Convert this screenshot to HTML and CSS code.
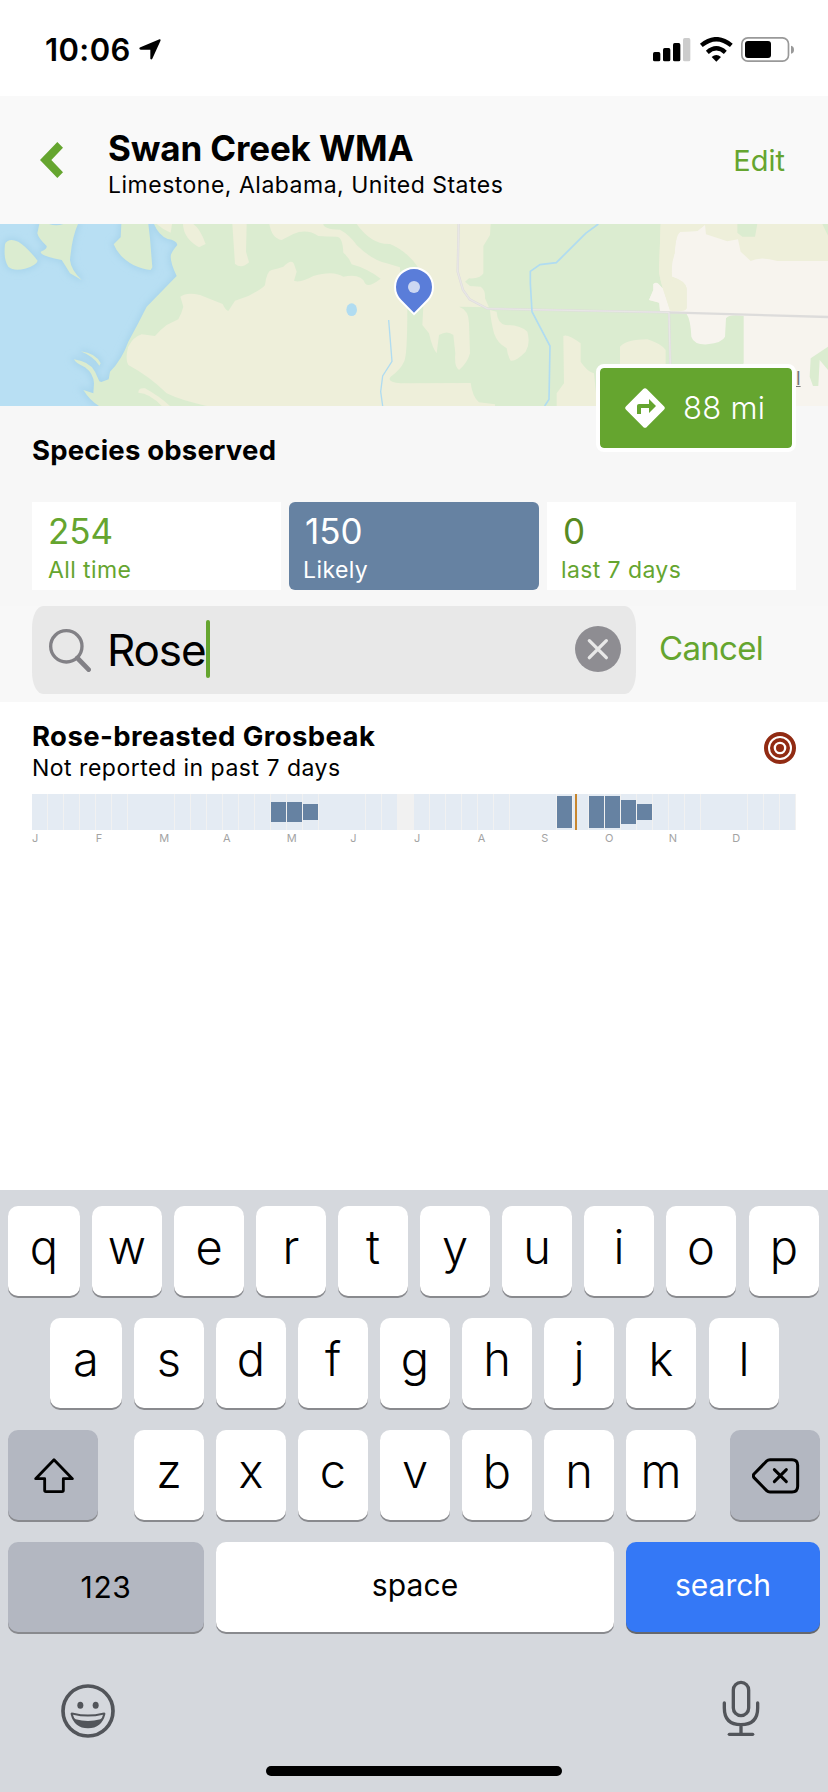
FILE: index.html
```html
<!DOCTYPE html>
<html lang="en">
<head>
<meta charset="utf-8">
<title>Swan Creek WMA</title>
<link rel="stylesheet" href="styles.css">
</head>
<body>
<div class="screen">
  <div class="status">
    <div class="status-left">
      <span class="time">10:06</span>
      <svg class="loc" viewBox="0 0 66 64"><path d="M62 1Q66 0 65 5L40 60Q37 65 34 60V33H5Q-2 31 2 26Z"/></svg>
    </div>
    <div class="status-right">
      <svg width="142" height="26" viewBox="0 0 426 78">
        <rect x="0" y="45" width="22" height="28" rx="5"/><rect x="30" y="33" width="22" height="40" rx="5"/><rect x="60" y="18" width="22" height="55" rx="5"/><rect x="90" y="3" width="22" height="70" rx="5" fill="#ccc"/>
        <path d="M145 25Q190 -12 235 25" fill="none" stroke="#000" stroke-width="13"/>
        <path d="M163 46Q190 22 217 46" fill="none" stroke="#000" stroke-width="13"/>
        <path d="M176 60Q190 48 204 60L190 74Z"/>
        <rect x="266.500" y="2.500" width="140" height="70" rx="18" fill="#fff" stroke="#999" stroke-width="5"/>
        <rect x="276" y="12" width="78" height="51" rx="9"/>
        <path d="M414 26Q423 28 423 38T414 50Z" fill="#999"/>
      </svg>
    </div>
  </div>

  <header class="header">
    <svg class="back" viewBox="0 0 69 108"><path d="M52 0L69 17L34 54L69 91L52 108L0 54Z"/></svg>
    <div class="heading">
      <h1 class="title">Swan Creek WMA</h1>
      <div class="subtitle">Limestone, Alabama, United States</div>
    </div>
    <a class="edit">Edit</a>
  </header>

  <div class="map">
    <svg class="map-art" viewBox="0 42 2484 546">
      <defs>
        <filter id="soft" x="-10%" y="-10%" width="120%" height="120%"><feGaussianBlur stdDeviation="9"/></filter>
        <g id="land">
          <path d="M462 42Q476 76 503 87Q530 91 532 105Q512 128 512 140Q512 160 530 198L440 290Q415 340 385 395Q365 450 330 485L326 508L304 516L298 514Q292 500 285 485Q270 455 222 448Q225 458 255 472Q280 490 282 520L280 550L250 540Q270 572 297 588H1300V42Z"/>
          <path d="M242 424Q288 430 302 460L298 467Q282 440 242 424Z"/>
          <path d="M15 102Q25 83 55 95Q80 110 113 152Q110 165 75 176Q40 184 25 170Q10 150 15 102Z"/>
          <path d="M118 42L112 70Q115 85 140 108Q142 118 122 125Q120 138 185 150Q195 165 210 190L245 210Q213 180 210 150Q216 80 234 42H190Q168 50 147 42Z"/>
          <path d="M364 42L362 82L341 103Q355 140 400 165Q430 178 452 180L457 172L450 85L445 42Z"/>
        </g>
      </defs>
      <rect y="42" width="2484" height="546" fill="#b8dff3"/>
      <use href="#land" fill="#a9d5ec" stroke="#a9d5ec" stroke-width="14" filter="url(#soft)"/>
      <use href="#land" fill="#dbecd0"/>
      <g fill="#eeefda">
        <path d="M541 260Q560 245 600 255L668 282Q676 300 685 303L705 272L745 258Q790 235 795 225Q800 183 815 180Q835 175 850 170Q875 145 882 162L890 185L882 212Q900 220 940 198Q1000 180 1030 200Q1085 190 1095 220Q1104 235 1142 206Q1100 175 1055 163Q1045 140 1030 128Q1028 80 1010 80Q980 80 955 78Q920 55 880 72L845 90Q815 85 808 42H2484V588H620Q540 570 500 550Q450 500 385 465Q375 450 384 412Q400 380 425 373L465 378Q480 360 500 345L535 328Q545 310 550 290Z"/>
        <path d="M470 42Q490 60 512 68L516 42ZM549 42Q550 85 597 112L617 102Q600 55 580 42ZM697 42L705 162Q725 178 747 157L738 125L740 42ZM415 548Q415 532 435 535Q480 560 510 588H485Q450 550 415 548Z"/>
      </g>
      <g fill="#dbecd0">
        <path d="M970 42Q970 58 1020 59Q1050 75 1070 105Q1115 150 1160 160L1200 172V215L1260 240V180Q1225 125 1170 102Q1115 105 1070 42Z"/>
      </g>
      <ellipse cx="1055" cy="299" rx="16" ry="19" fill="#b0dcf1"/>
      <path d="M1166 330L1176 454L1148 498L1142 545L1148 588" fill="none" stroke="#b0dcf1" stroke-width="4"/>
      <g transform="translate(1242 0)">
        <path fill="#f7f4ee" d="M774 200Q770 160 782 130Q785 70 800 65L850 63L873 45L876 73L940 94L972 88L980 125L1010 153Q1040 138 1090 153H1242V588H700V300L735 275L705 270L718 240V222Q730 215 746 235L768 300Q815 305 818 295V235Q815 213 774 200Z"/>
        <path fill="#dbecd0" d="M230 42L228 75L208 108L208 190Q200 207 165 205L153 215L168 228L200 230Q215 240 213 265L225 292L135 290Q165 300 165 340L168 430Q160 460 135 480Q120 470 124 430L118 375Q100 360 75 375L68 430Q55 415 45 370L25 345L28 290L-20 295Q-20 440 -30 455Q-40 478 -70 500Q-84 515 -40 520L170 519Q175 560 195 577L243 583V588H428V550L450 520L448 378Q460 370 500 400V455Q520 485 540 490L550 588H900L989 460V318Q945 312 936 325L933 380Q925 398 880 403Q840 405 832 380Q830 330 818 312L765 305L738 302L736 278L705 270L718 240V222Q730 215 746 235Q737 200 735 185L740 42Z"/>
        <path fill="#f7f4ee" d="M705 270L718 240V222Q730 210 744 235L768 304L738 302L736 278Z"/>
        <path fill="#eeefda" d="M744 225L768 302Q815 308 818 295V235Q815 213 774 200ZM618 465V410Q640 388 700 388Q740 400 755 420V465ZM228 300L248 305Q250 340 275 345Q320 345 340 365Q350 400 335 425Q305 455 290 452Q280 435 278 415Q250 400 240 370Q230 330 228 300Z"/>
        <path fill="#eeefda" d="M740 42H873L850 63L800 65Q785 70 782 130Q770 160 774 200L777 210L744 226Q737 200 735 185Z"/>
        <path fill="#dbecd0" d="M970 42V68L985 80H1023L1030 42ZM1225 42L1242 77V42ZM1242 410L1190 445L1187 500L1197 528H1213L1217 450L1242 480Z"/>
        <path d="M134 42L131 185L147 240L167 268L220 296L765 307L1242 321M765 307L769 470" fill="none" stroke="#dddcdb" stroke-width="7"/>
        <path d="M134 42L131 185L147 240L167 268L220 296L765 307M765 307L769 470" fill="none" stroke="#e8e6e6" stroke-width="4"/>
        <path d="M553 42L515 70L427 158L378 164L349 184V220L354 305L408 408L405 568L392 588" fill="none" stroke="#b0dcf1" stroke-width="5"/>
      </g>
      <path d="M1242 308L1203.800 269.200A54 54 0 1 1 1280.200 269.200Z" fill="#5a7dd9" stroke="#fff" stroke-width="12" paint-order="stroke"/>
      <circle cx="1242" cy="231" r="18" fill="#cdd8f2"/>
    </svg>
    <span class="legal">l</span>
    <a class="directions">
      <svg class="turn" viewBox="0 0 120 120"><path d="M54 4Q60-3 66 4L116 54Q123 60 116 66L66 116Q60 123 54 116L4 66Q-3 60 4 54Z" fill="#fff"/><path d="M36 78V53Q36 48 42 48H72V33L93 54L72 75V60H48V78Z" fill="#65a52f"/></svg>
      <span class="miles">88 mi</span>
    </a>
  </div>

  <section class="species">
    <h2 class="section-title">Species observed</h2>
    <div class="cards">
      <div class="card"><div class="num n1">254</div><div class="lab l1">All time</div></div>
      <div class="card on"><div class="num n2">150</div><div class="lab l2">Likely</div></div>
      <div class="card"><div class="num n3">0</div><div class="lab l3">last 7 days</div></div>
    </div>
  </section>

  <div class="search">
    <div class="field">
      <svg class="mag" viewBox="0 0 126 129"><circle cx="52" cy="52" r="47" fill="none" stroke="#828186" stroke-width="10"/><path d="M85 87L119 122" stroke="#828186" stroke-width="14" stroke-linecap="round"/></svg>
      <span class="query">Rose</span><span class="caret"></span>
      <svg class="clear" viewBox="0 0 138 138"><circle cx="69" cy="69" r="69" fill="#8e8d92"/><path d="M43 44L94 95M94 44L43 95" stroke="#e8e8e8" stroke-width="10" stroke-linecap="round"/></svg>
    </div>
    <a class="cancel">Cancel</a>
  </div>

  <main class="results">
    <div class="bird">
      <div>
        <div class="name">Rose-breasted Grosbeak</div>
        <div class="note">Not reported in past 7 days</div>
      </div>
      <svg class="target" viewBox="0 0 96 96" fill="none" stroke="#912b13"><circle cx="48" cy="48" r="42" stroke-width="12"/><circle cx="48" cy="48" r="24.500" stroke-width="11"/><circle cx="48" cy="48" r="12" fill="#912b13" stroke="none"/></svg>
    </div>
    <div class="weeks" id="weeks"></div>
    <div class="months"><span>J</span><span>F</span><span>M</span><span>A</span><span>M</span><span>J</span><span>J</span><span>A</span><span>S</span><span>O</span><span>N</span><span>D</span></div>
  </main>

  <div class="keyboard">
    <div class="row r1"><b class="key wide">q</b><b class="key">w</b><b class="key">e</b><b class="key">r</b><b class="key">t</b><b class="key">y</b><b class="key">u</b><b class="key">i</b><b class="key">o</b><b class="key last">p</b></div>
    <div class="row r2"><b class="key wide">a</b><b class="key">s</b><b class="key">d</b><b class="key">f</b><b class="key">g</b><b class="key">h</b><b class="key">j</b><b class="key">k</b><b class="key last">l</b></div>
    <div class="row r3">
      <b class="key fn shift"><svg width="40" height="36" viewBox="0 0 120 108" fill="none" stroke="#000" stroke-width="8.500" stroke-linejoin="round"><path d="M60 5L115 62H88V97Q88 101 84 101H36Q32 101 32 97V62H5Z"/></svg></b>
      <b class="key">z</b><b class="key">x</b><b class="key">c</b><b class="key">v</b><b class="key">b</b><b class="key">n</b><b class="key">m</b>
      <b class="key fn del"><svg width="48" height="36" viewBox="0 0 144 108" fill="none" stroke="#000" stroke-width="9" stroke-linejoin="round" stroke-linecap="round"><path d="M54 5H120Q137 5 137 22V85Q137 102 120 102H54Q48 102 44 98L6 59Q2 53 6 48L44 9Q48 5 54 5Z"/><path d="M67 35L103 71M103 35L67 71"/></svg></b>
    </div>
    <div class="row r4"><b class="key fn num-key">123</b><b class="key space">space</b><b class="key go">search</b></div>
    <div class="tray">
      <svg width="54" height="54" viewBox="0 0 162 162"><circle cx="81" cy="81" r="75" fill="none" stroke="#52555a" stroke-width="11"/><ellipse cx="58" cy="63.500" rx="9" ry="10.500" fill="#52555a"/><ellipse cx="104" cy="63.500" rx="9" ry="10.500" fill="#52555a"/><path d="M29 91Q27 83 37 86Q81 97 125 86Q135 83 133 91Q122 133 81 133T29 91Z" fill="#52555a"/><path d="M36 92Q81 103 126 92Q124 102 118 106Q81 116 44 106Q38 102 36 92Z" fill="#d5d8dd"/></svg>
      <svg width="38" height="58" viewBox="0 0 114 174" fill="none" stroke="#52555a" stroke-width="10" stroke-linecap="round"><rect x="34" y="7" width="46" height="100" rx="23"/><path d="M7 69V84Q7 134 57 134T107 84V69M57 134V160" /><path d="M22 163H92"/></svg>
    </div>
    <div class="home"></div>
  </div>
</div>
<script src="app.js"></script>
</body>
</html>
```
FILE: styles.css
```css
* { box-sizing: border-box; }
body { margin: 0; background: #fff; color: #000; font-family: Inter, "Liberation Sans", sans-serif; }
h1, h2 { margin: 0; }
svg { display: block; flex: none; }
.screen { width: 828px; height: 1792px; display: flex; flex-direction: column; overflow: hidden; white-space: nowrap; }

.status { height: 96px; display: flex; justify-content: space-between; padding: 30px 34px 0 45px; }
.status-left { display: flex; align-items: flex-start; }
.time { width: 94px; font-size: 31px; font-weight: 600; line-height: 40px; letter-spacing: .4px; }
.loc { width: 22px; height: 21px; margin-top: 9px; }
.status-right { padding-top: 7px; margin-right: -1px; }

.header { height: 128px; background: #f9f9f9; display: flex; padding: 32px 43px 0 40px; }
.back { width: 23px; height: 36px; fill: #65a52f; margin-top: 14px; }
.heading { margin-left: 45px; flex: 1; }
.title { font-size: 35px; font-weight: 700; line-height: 40px; letter-spacing: -.15px; }
.subtitle { font-size: 23px; line-height: 34px; letter-spacing: .5px; }
.edit { font-size: 29px; line-height: 65px; color: #65a52f; }

.map { height: 182px; position: relative; }
.map-art { width: 828px; height: 182px; }
.legal { position: absolute; left: 796px; top: 143px; font-size: 19px; line-height: 24px; color: #777; text-decoration: underline; }
.directions { position: absolute; left: 596px; top: 140px; width: 200px; height: 88px; border: 4px solid #fff; border-radius: 8px; background: #65a52f; background-clip: padding-box; display: flex; align-items: center; padding-left: 25px; gap: 18px; color: #fff; }
.turn { width: 40px; height: 40px; }
.miles { font-size: 31px; font-weight: 300; line-height: 40px; letter-spacing: .3px; }

.species { height: 200px; background: #f7f7f7; padding: 26px 32px 0; }
.section-title { font-size: 27.5px; line-height: 36px; font-weight: 700; letter-spacing: .2px; }
.cards { display: grid; grid-template-columns: 249px 250px 249px; gap: 8px; margin-top: 34px; }
.card { height: 88px; background: #fff; color: #65a52f; padding: 9px 0 0 16px; }
.on { background: #6682a2; color: #fff; border-radius: 6px; }
.num { font-size: 35px; line-height: 41px; }
.n3 { color: #578a23; }
.lab { font-size: 23px; line-height: 37px; letter-spacing: .4px; }
.l2, .l3 { margin-left: -2px; }

.search { height: 96px; background: #f8f8f8; padding: 0 32px 8px; display: flex; }
.field { width: 604px; height: 88px; background: #e8e8e8; border-radius: 11px / 22px; display: flex; align-items: center; padding: 0 15px 0 17px; }
.mag { width: 42px; height: 43px; }
.query { font-size: 44px; line-height: 60px; margin-left: 16px; letter-spacing: -1.1px; }
.caret { width: 4px; height: 58px; border-radius: 2px; background: #65a52f; margin: -2px auto 0 0; }
.clear { width: 46px; height: 46px; margin-top: -2px; }
.cancel { margin-left: 23px; font-size: 33px; line-height: 84px; letter-spacing: -.7px; color: #65a52f; }

.results { flex: 1; padding: 16px 32px 0; }
.bird { height: 76px; display: flex; justify-content: space-between; }
.name { font-size: 27.5px; font-weight: 700; line-height: 37px; letter-spacing: .4px; }
.note { font-size: 23px; line-height: 27px; letter-spacing: .5px; }
.target { width: 32px; height: 32px; margin-top: 14px; }
.weeks { height: 36px; background: #f1f1f1; display: grid; grid-template-columns: repeat(48, 1fr); }
.week { display: flex; align-items: center; margin-right: .8px; background: #e4ebf3; }
.week.none { background: #f1f1f1; }
.bar { width: 100%; background: #6682a2; }
.today { width: 2.5px; height: 36px; margin-left: 1.5px; background: #c8862e; }
.months { display: grid; grid-template-columns: repeat(12, 1fr); font-size: 11px; line-height: 16px; color: #a3a3a3; }

.keyboard { height: 602px; background: #d5d8dd; padding: 16px 8px 0; display: flex; flex-direction: column; }
.row { display: flex; gap: 12px; height: 90px; margin-bottom: 22px; }
.r2 { padding-left: 42px; }
.key { width: 70px; height: 90px; border-radius: 10px; background: #fff; box-shadow: 0 2px 0 #898a8e; font-size: 47px; font-weight: 330; line-height: 82px; text-align: center; flex: none; }
.wide { width: 72px; }
.last { margin-left: 1px; }
.fn { background: #b3b7c1; }
.shift { width: 90px; margin-right: 24px; padding: 28px 0 0 26px; }
.del { width: 90px; margin-left: 22px; padding: 28px 0 0 22px; }
.num-key, .space, .go { font-size: 30px; font-weight: 400; line-height: 86px; }
.num-key { width: 196px; line-height: 90px; letter-spacing: .6px; }
.space { width: 398px; letter-spacing: .1px; }
.go { width: 194px; background: #3478f6; color: #fff; box-shadow: 0 2px 0 #66686d; }
.tray { display: flex; justify-content: space-between; padding: 26px 60px 0 52px; height: 102px; }
.tray svg:first-child { margin-top: 4px; margin-left: 1px; }
.home { width: 296px; height: 10px; border-radius: 5px; background: #000; margin: 10px auto 0; }
```
FILE: app.js
```js
// Bar height in px for each of the 48 weeks of the year; all others are empty.
const bars = { 15: 20, 16: 20, 17: 16, 33: 32, 35: 32, 36: 32, 37: 24, 38: 16 };
const NO_DATA = 23;
const TODAY = 34;
const weeks = document.getElementById('weeks');
for (let i = 0; i < 48; i++) {
  const week = document.createElement('div');
  week.className = i === NO_DATA ? 'week none' : 'week';
  if (bars[i]) {
    const bar = document.createElement('div');
    bar.className = 'bar';
    bar.style.height = bars[i] + 'px';
    week.append(bar);
  }
  if (i === TODAY) {
    const line = document.createElement('div');
    line.className = 'today';
    week.append(line);
  }
  weeks.append(week);
}
```
